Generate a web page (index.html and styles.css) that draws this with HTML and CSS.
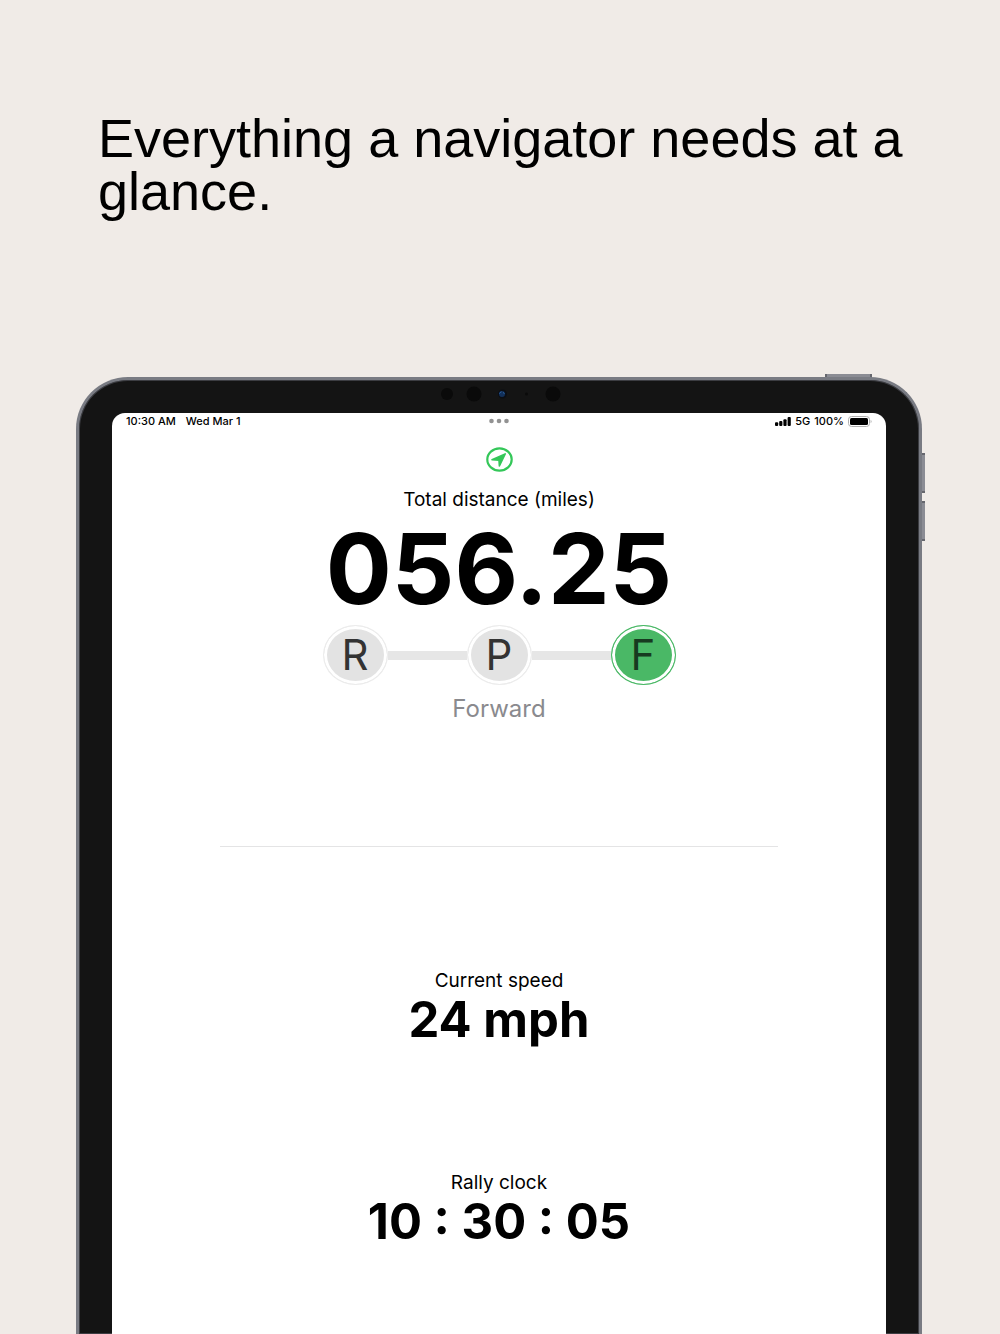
FILE: index.html
```html
<!DOCTYPE html>
<html lang="en">
<head>
  <meta charset="UTF-8">
  <meta name="viewport" content="width=device-width, initial-scale=1.0">
  <title>Rally Navigator</title>
  <link rel="stylesheet" href="styles.css">
</head>
<body>
  <h1>Everything a navigator needs at a glance.</h1>

  <!-- Tablet -->
  <div class="tablet">
    <span class="key key-power"></span>
    <span class="key key-up"></span>
    <span class="key key-down"></span>

    <div class="bezel">
      <svg class="sensors" width="122" height="16" viewBox="0 0 122 16">
        <circle cx="7" cy="8" r="6" fill="#0a0a0a"/>
        <circle cx="34" cy="8" r="7.5" fill="#0a0a0a"/>
        <circle cx="62.500" cy="8" r="4.500" fill="#0b0e14"/>
        <circle cx="62" cy="8" r="3" fill="#12305a"/>
        <path d="M59.500 7.500a3 3 0 0 1 2-1.700M63 6.500l1.500 1" stroke="#2f68a8" fill="none"/>
        <circle cx="86.500" cy="8" r="1.500" fill="#0a0a0a"/>
        <circle cx="113" cy="8" r="7.500" fill="#0a0a0a"/>
      </svg>

      <main class="screen">
        <!-- Status bar -->
        <div class="status-bar">
          <div class="status-left">
            <span>10:30 AM</span>
            <span>Wed Mar 1</span>
          </div>
          <svg class="dots" width="20" height="6" viewBox="0 0 20 6" fill="#929292">
            <circle cx="2.500" cy="3" r="2.300"/>
            <circle cx="10" cy="3" r="2.300"/>
            <circle cx="17.500" cy="3" r="2.300"/>
          </svg>
          <div class="status-right">
            <svg width="16" height="9" viewBox="0 0 16 9">
              <rect x="0" y="5.300" width="3.200" height="3.700" rx="1"/>
              <rect x="4.200" y="4" width="3.200" height="5" rx="1"/>
              <rect x="8.400" y="2.200" width="3.200" height="6.800" rx="1"/>
              <rect x="12.600" y="0" width="3.200" height="9" rx="1"/>
            </svg>
            <span>5G</span>
            <span>100%</span>
            <svg class="battery" width="24" height="11" viewBox="0 0 24 11">
              <rect x=".5" y=".5" width="21" height="10" rx="3" fill="#fff" stroke="#b0b0b0"/>
              <rect x="2" y="2" width="18" height="7" rx="1.500"/>
              <path d="M22.600 3.800a2 2 0 0 1 0 3.400z" fill="#b0b0b0"/>
            </svg>
          </div>
        </div>

        <!-- Distance -->
        <section class="distance">
          <svg class="gps" width="27" height="25" viewBox="0 0 27 25">
            <ellipse cx="13.500" cy="12.500" rx="12.200" ry="11.200" fill="none" stroke="#34c759" stroke-width="2.200"/>
            <path d="M19.200 6.900 13.400 19 13 13.100 6 12.700Z" fill="#34c759" stroke="#34c759" stroke-width="1.600" stroke-linejoin="round"/>
          </svg>
          <h2>Total distance (miles)</h2>
          <p class="total">056.25</p>
          <div class="gears">
            <button type="button" class="gear">R</button>
            <span class="link"></span>
            <button type="button" class="gear">P</button>
            <span class="link"></span>
            <button type="button" class="gear active">F</button>
          </div>
          <p class="direction">Forward</p>
        </section>

        <hr>

        <!-- Speed -->
        <section>
          <h2>Current speed</h2>
          <p class="value">24 mph</p>
        </section>

        <!-- Clock -->
        <section>
          <h2>Rally clock</h2>
          <p class="value">10 : 30 : 05</p>
        </section>
      </main>
    </div>
  </div>
</body>
</html>
```
FILE: styles.css
```css
:root {
  --bg: #f0ebe7;
  --bezel: #141414;
  --metal: #797b83;
  --green: #4ab866;
  --gray: #e3e3e3;
}

* {
  margin: 0;
  padding: 0;
  box-sizing: border-box;
}

body {
  font-family: 'Inter', sans-serif;
  background: var(--bg);
  color: #000;
  min-height: 100vh;
  display: flex;
  flex-direction: column;
}

h1 {
  padding: 112px 77px 0 98px;
  min-height: 377px;
  font-family: 'Liberation Sans', Arial, sans-serif;
  font-size: 54px;
  font-weight: 400;
  line-height: 53px;
}

/* Tablet */
.tablet {
  position: relative;
  flex: 1;
  display: flex;
  margin: 0 78px 0 76px;
}

.bezel {
  position: relative;
  flex: 1;
  display: flex;
  padding: 33px 33px 0;
  background: var(--bezel);
  border: solid var(--metal);
  border-width: 3px 3px 0;
  border-radius: 52px 52px 0 0;
  box-shadow: inset 0 0 0 1px #3c3d42;
}

.sensors {
  position: absolute;
  top: 6px;
  left: 50%;
  margin-left: -59px;
}

.key {
  position: absolute;
  background: #8b8c94;
  border: solid #66676e;
}

.key-power {
  top: -3px;
  right: 50px;
  width: 47px;
  height: 4px;
  border-width: 0 2px;
}

.key-up,
.key-down {
  right: -3px;
  width: 4px;
  height: 40px;
  border-width: 2px 0;
}

.key-up {
  top: 76px;
}

.key-down {
  top: 124px;
}

/* Screen */
.screen {
  flex: 1;
  display: flex;
  flex-direction: column;
  align-items: center;
  gap: 121px;
  background: #fff;
  border-radius: 13px 13px 0 0;
}

.status-bar {
  display: grid;
  grid-template-columns: 1fr auto 1fr;
  align-items: center;
  width: 100%;
  height: 16px;
  margin-bottom: -103px;
  padding: 0 14px;
  font-size: 11px;
  font-weight: 500;
}

.status-left,
.status-right {
  display: flex;
  align-items: center;
  gap: 10px;
}

.status-right {
  justify-content: flex-end;
  gap: 4px;
}

section {
  display: flex;
  flex-direction: column;
  align-items: center;
}

h2 {
  font-size: 19px;
  font-weight: 400;
  line-height: 26px;
}

.gps {
  margin-bottom: 15px;
}

.total {
  font-size: 98px;
  font-weight: 700;
  line-height: 112px;
}

/* Gear selector */
.gears {
  display: flex;
  align-items: center;
}

.gear {
  width: 65px;
  height: 60px;
  border: 1px solid #ececec;
  border-radius: 50%;
  background: var(--gray);
  box-shadow: inset 0 0 0 3px #fff;
  color: #333;
  font: 400 42px/1 'Inter', sans-serif;
  cursor: pointer;
}

.gear.active {
  background: var(--green);
  border-color: var(--green);
  color: #173a20;
}

.link {
  width: 79px;
  height: 9px;
  background: #e6e6e6;
}

.direction {
  margin-top: 8px;
  color: #8a8a8e;
  font-size: 24px;
  line-height: 32px;
}

hr {
  width: 72%;
  border: 0;
  border-top: 1px solid #e4e4e5;
}

.value {
  margin-bottom: 3px;
  font-size: 49px;
  font-weight: 700;
  line-height: 52px;
}
```
